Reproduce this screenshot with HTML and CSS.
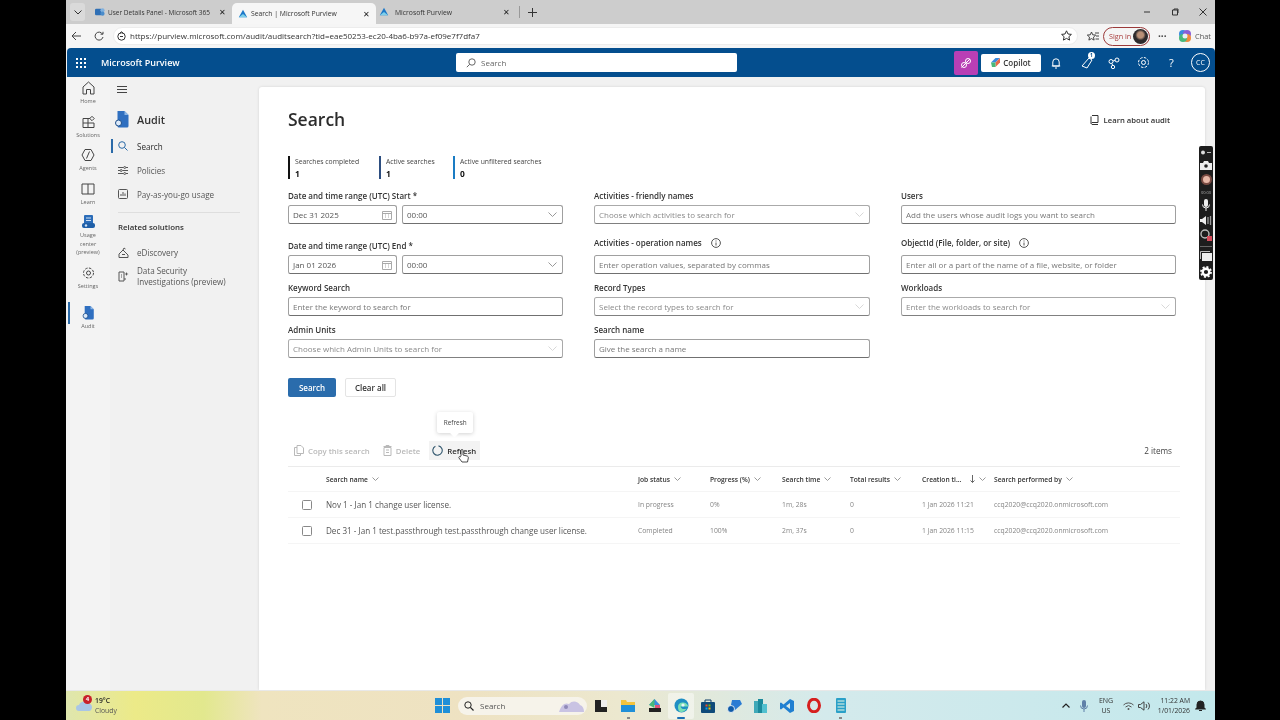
FILE: index.html
```html
<!DOCTYPE html>
<html lang="en">
<head>
<meta charset="utf-8">
<title>Search | Microsoft Purview</title>
<link rel="stylesheet" href="styles.css">
</head>
<body>
<div class="desktop">
  <div class="tabstrip">
    <div class="tab-menu"><svg width="8" height="5" viewBox="0 0 8 5"><path class="ln" d="M.5.5 4 4 7.500.5"/></svg></div>
    <div class="tab tab-a">
      <svg class="fav" viewBox="0 0 12 12"><rect x="0" y="2" width="8" height="8" rx="1.500" fill="#2f6fb5"/><circle cx="9" cy="4" r="2.500" fill="#7fb0de"/><circle cx="9" cy="8" r="2.500" fill="#4a8ccb"/></svg>
      <span class="tab-title">User Details Panel - Microsoft 365</span><span class="tab-x">✕</span>
    </div>
    <div class="tab tab-b">
      <svg class="fav" viewBox="0 0 12 12"><path d="M6 1 11 10H1z" fill="#1d78c8"/><path d="M6 6l5 4H1z" fill="#7fd0ea"/></svg>
      <span class="tab-title">Search | Microsoft Purview</span><span class="tab-x">✕</span>
    </div>
    <div class="tab tab-c">
      <svg class="fav" viewBox="0 0 12 12"><path d="M6 1 11 10H1z" fill="#1d78c8"/><path d="M6 6l5 4H1z" fill="#7fd0ea"/></svg>
      <span class="tab-title">Microsoft Purview</span><span class="tab-x">✕</span>
    </div>
    <div class="tab-sep"></div>
    <div class="tab-plus"><svg width="9" height="9" viewBox="0 0 9 9"><path class="ln" d="M4.500 0v9M0 4.500h9"/></svg></div>
    <div class="win-btns">
      <svg width="8" height="8" viewBox="0 0 8 8"><path class="ln" d="M1 4h6"/></svg>
      <svg width="8" height="8" viewBox="0 0 8 8"><path class="ln" d="M1.500 2h5v5h-5zM3 2V1h4v4"/></svg>
      <svg width="8" height="8" viewBox="0 0 8 8"><path class="ln" d="M.5.500l7 7M7.500.5l-7 7"/></svg>
    </div>
  </div>

  <div class="addressbar">
    <svg class="nav-ic" width="11" height="10" viewBox="0 0 11 10"><path class="ln" d="M10 5H1M5 1 1 5l4 4"/></svg>
    <svg class="nav-ic nav-reload" width="10" height="10" viewBox="0 0 10 10"><path class="ln" d="M8.500 3A4 4 0 1 0 9 6M9 .8V3.200H6.600"/></svg>
    <div class="url">
      <svg width="9" height="10" viewBox="0 0 9 10"><circle class="ln" cx="4.500" cy="5.500" r="3.700"/><path class="ln" d="M3 2 4.500.8 6 2M3 5.500h3"/></svg>
      <span>https://purview.microsoft.com/audit/auditsearch?tid=eae50253-ec20-4ba6-b97a-ef09e7f7dfa7</span>
      <svg class="url-star" width="11" height="11" viewBox="0 0 11 11"><path class="ln" d="M5.500.8 7 4l3.400.4-2.500 2.300.7 3.400-3.100-1.700-3.100 1.700.7-3.400L.6 4.400 4 4z"/></svg>
    </div>
    <svg class="fav-list" width="12" height="11" viewBox="0 0 12 11"><path class="ln" d="M4.500 1 5.700 3.800l3 .3-2.200 2 .6 3-2.600-1.500L1.900 9.100l.6-3-2.200-2 3-.3zM8 2h4M9 5h3M8.500 8H12"/></svg>
    <div class="signin"><span>Sign in</span><i class="avatar"></i></div>
    <div class="dots">···</div>
    <svg class="chat-ic" width="14" height="14" viewBox="0 0 14 14"><circle cx="5" cy="5" r="4" fill="#3a8be0"/><circle cx="9" cy="5" r="4" fill="#8a5fd6"/><circle cx="9" cy="9" r="4" fill="#f08a3c"/><circle cx="5" cy="9" r="4" fill="#49b87a"/><circle cx="7" cy="7" r="2.500" fill="#e9f0f5"/></svg>
    <span class="chat">Chat</span>
  </div>

  <header class="appbar">
    <div class="brand">
      <svg class="waffle" width="10" height="10" viewBox="0 0 10 10"><g fill="#fff"><rect width="2" height="2"/><rect x="4" width="2" height="2"/><rect x="8" width="2" height="2"/><rect y="4" width="2" height="2"/><rect x="4" y="4" width="2" height="2"/><rect x="8" y="4" width="2" height="2"/><rect y="8" width="2" height="2"/><rect x="4" y="8" width="2" height="2"/><rect x="8" y="8" width="2" height="2"/></g></svg>
      <span>Microsoft Purview</span>
    </div>
    <div class="globalsearch">
      <svg width="10" height="10" viewBox="0 0 10 10"><circle class="ln" cx="6" cy="4" r="3.200"/><path class="ln" d="M3.700 6.300.8 9.200"/></svg>
      <span>Search</span>
    </div>
    <div class="appbar-right">
      <div class="magenta"><svg width="12" height="12" viewBox="0 0 12 12"><circle class="ln" cx="8" cy="4" r="2.500"/><circle class="ln" cx="4" cy="8" r="2.500"/><path class="ln" d="M1.500 10.500 10 2"/></svg></div>
      <div class="copilot"><svg width="9" height="9" viewBox="0 0 9 9"><path d="M0 4.500 4.500 0 9 0 4.500 4.500z" fill="#3a8be0"/><path d="M9 0v4.500L4.500 9V4.500z" fill="#e66a4a"/><path d="M0 4.500 4.500 4.500V9H1z" fill="#49b87a"/></svg><span>Copilot</span></div>
      <svg class="bell" width="12" height="12" viewBox="0 0 12 12"><path class="ln" d="M2.800 9V5a3.200 3.200 0 0 1 6.400 0v4zM1.800 9h8.400M5 11h2"/></svg>
      <div class="hdr-fb">
        <svg width="13" height="13" viewBox="0 0 13 13"><path class="ln" d="M1 10 8 2l3 2-5 8z"/></svg>
        <b>1</b>
      </div>
      <svg class="hdr-net" width="12" height="12" viewBox="0 0 12 12"><circle class="ln" cx="9" cy="3" r="2"/><circle class="ln" cx="3" cy="4.500" r="2"/><circle class="ln" cx="5" cy="10" r="1.700"/><path class="ln" d="M5 4 7 3.500M4 6.500l.6 2"/></svg>
      <svg class="hdr-gear" width="13" height="13" viewBox="0 0 13 13"><circle class="ln" cx="6.500" cy="6.500" r="2"/><circle class="ln" cx="6.500" cy="6.500" r="5" stroke-dasharray="2.500 1.400"/></svg>
      <span class="hdr-q">?</span>
      <span class="hdr-cc">CC</span>
    </div>
  </header>

  <div class="appbody">
    <aside class="rail">
      <div class="rail-item"><svg width="13" height="14" viewBox="0 0 13 14"><path class="ln" d="M1 6 6.500 1 12 6v7H8.500V8.500h-4V13H1z"/></svg><span>Home</span></div>
      <div class="rail-item"><svg width="13" height="13" viewBox="0 0 13 13"><path class="ln" d="M1 3h5v9H1zM1 7.500h11V12H6M6 3h2M10 .8l2.200 2.200L10 5.200 7.800 3z"/></svg><span>Solutions</span></div>
      <div class="rail-item"><svg width="14" height="14" viewBox="0 0 14 14"><path class="ln" d="M4 1.500h6L13 7l-3 5.500H4L1 7zM8.500 3.500 5.500 10.500"/></svg><span>Agents</span></div>
      <div class="rail-item"><svg width="14" height="12" viewBox="0 0 14 12"><path class="ln" d="M1 1h12v10H1zM7 1v10"/></svg><span>Learn</span></div>
      <div class="rail-item rail-tall"><svg width="13" height="14" viewBox="0 0 13 14"><rect x="2" y="0" width="9" height="9" rx="1" fill="#2b6cb8"/><path d="M4 3h5M4 5.500h5" stroke="#cfe0f3"/><rect x="0" y="8" width="13" height="5" rx="2" fill="#1f5fa8"/><circle cx="4" cy="10.500" r="1.200" fill="#cfe0f3"/></svg><span>Usage center (preview)</span></div>
      <div class="rail-item"><svg width="13" height="13" viewBox="0 0 13 13"><circle class="ln" cx="6.500" cy="6.500" r="2"/><circle class="ln" cx="6.500" cy="6.500" r="5" stroke-dasharray="2.500 1.400"/></svg><span>Settings</span></div>
      <div class="rail-item rail-audit"><svg width="12" height="14" viewBox="0 0 14 17"><path d="M3 0h7l4 4v11a1.500 1.500 0 0 1-1.500 1.500H4.500A1.500 1.500 0 0 1 3 15z" fill="#2f6fc0"/><path d="M10 0l4 4h-4z" fill="#8db7e6"/><circle cx="4" cy="12" r="3" fill="#dceafa" stroke="#1c4e8a"/></svg><span>Audit</span></div>
    </aside>

    <nav class="sidenav">
      <svg class="hamb" width="10" height="7" viewBox="0 0 10 7"><path class="ln" d="M0 .5h10M0 3.500h10M0 6.500h10"/></svg>
      <div class="nav-head">
        <svg width="15" height="17" viewBox="0 0 14 17"><path d="M3 0h7l4 4v11a1.500 1.500 0 0 1-1.500 1.500H4.500A1.500 1.500 0 0 1 3 15z" fill="#2f6fc0"/><path d="M10 0l4 4h-4z" fill="#8db7e6"/><circle cx="4" cy="12" r="3" fill="#dceafa" stroke="#1c4e8a"/></svg>
        <span>Audit</span>
      </div>
      <ul class="nav-list">
        <li class="nav-row is-active"><svg width="10" height="10" viewBox="0 0 10 10"><circle class="ln" cx="4" cy="4" r="3.300"/><path class="ln" d="M6.400 6.400 9.500 9.500"/></svg><span>Search</span></li>
        <li class="nav-row"><svg width="10" height="9" viewBox="0 0 10 9"><path class="ln" d="M0 1.500h5.500M8 1.500h2M0 4.500h2M4.500 4.500H10M0 7.500h5.500M8 7.500h2"/><circle class="ln" cx="6.700" cy="1.500" r="1"/><circle class="ln" cx="3.200" cy="4.500" r="1"/><circle class="ln" cx="6.700" cy="7.500" r="1"/></svg><span>Policies</span></li>
        <li class="nav-row"><svg width="10" height="10" viewBox="0 0 10 10"><rect class="ln" x=".5" y=".5" width="9" height="9" rx="1"/><path class="ln" d="M3 7V5M5 7V3M7 7V4.500"/></svg><span>Pay-as-you-go usage</span></li>
      </ul>
      <div class="nav-div"></div>
      <div class="nav-sub">Related solutions</div>
      <ul class="nav-list nav-rel">
        <li class="nav-row"><svg width="11" height="11" viewBox="0 0 11 11"><path class="ln" d="M1 7 5 3l5 5v2.500H1zM5 3l1-2 1.500 1M4 7.500h3"/></svg><span>eDiscovery</span></li>
        <li class="nav-row nav-two"><svg width="11" height="11" viewBox="0 0 11 11"><path class="ln" d="M1 1h5v9H1zM3 4h1M3 6h1M6 8h2"/><path d="M8.500 1l.6 1.400L10.500 3l-1.400.6-.6 1.400-.6-1.400L6.500 3l1.400-.6z" fill="#555"/></svg><span>Data Security<br>Investigations (preview)</span></li>
      </ul>
    </nav>

    <main class="card">
      <div class="title-row">
        <h1>Search</h1>
        <div class="learn"><svg width="9" height="10" viewBox="0 0 9 10"><path class="ln" d="M2 .5h6v7H2A1.200 1.200 0 0 0 2 9.500h6M1 8.500V1.500"/></svg><span>Learn about audit</span></div>
      </div>

      <div class="stats">
        <div class="stat st-black"><span>Searches completed</span><b>1</b></div>
        <div class="stat st-navy"><span>Active searches</span><b>1</b></div>
        <div class="stat st-blue"><span>Active unfiltered searches</span><b>0</b></div>
      </div>

      <form class="form">
        <div class="field">
          <label>Date and time range (UTC) Start *</label>
          <div class="pair">
            <div class="ctl date"><span>Dec 31 2025</span><svg width="10" height="10" viewBox="0 0 10 10"><path class="ln cal" d="M.5 1.500h9v8h-9zM.5 3.500h9M3 5h1M6 5h1M3 7h1M6 7h1"/></svg></div>
            <div class="ctl time"><span>00:00</span><svg class="chev" width="9" height="5" viewBox="0 0 9 5"><path class="ln" d="M.5.500l4 4 4-4"/></svg></div>
          </div>
        </div>
        <div class="field">
          <label>Activities - friendly names</label>
          <div class="ctl muted"><span>Choose which activities to search for</span><svg class="chev" width="9" height="5" viewBox="0 0 9 5"><path class="ln" d="M.5.500l4 4 4-4"/></svg></div>
        </div>
        <div class="field">
          <label>Users</label>
          <div class="ctl"><span>Add the users whose audit logs you want to search</span></div>
        </div>

        <div class="field">
          <label>Date and time range (UTC) End *</label>
          <div class="pair">
            <div class="ctl date"><span>Jan 01 2026</span><svg width="10" height="10" viewBox="0 0 10 10"><path class="ln cal" d="M.5 1.500h9v8h-9zM.5 3.500h9M3 5h1M6 5h1M3 7h1M6 7h1"/></svg></div>
            <div class="ctl time"><span>00:00</span><svg class="chev" width="9" height="5" viewBox="0 0 9 5"><path class="ln" d="M.5.500l4 4 4-4"/></svg></div>
          </div>
        </div>
        <div class="field up1">
          <label>Activities - operation names <svg class="info" width="10" height="10" viewBox="0 0 10 10"><circle class="ln" cx="5" cy="5" r="4.400"/><path class="ln" d="M5 4.500V7.500M5 2.500v1"/></svg></label>
          <div class="ctl"><span>Enter operation values, separated by commas</span></div>
        </div>
        <div class="field up1">
          <label>ObjectId (File, folder, or site) <svg class="info" width="10" height="10" viewBox="0 0 10 10"><circle class="ln" cx="5" cy="5" r="4.400"/><path class="ln" d="M5 4.500V7.500M5 2.500v1"/></svg></label>
          <div class="ctl"><span>Enter all or a part of the name of a file, website, or folder</span></div>
        </div>

        <div class="field">
          <label>Keyword Search</label>
          <div class="ctl"><span>Enter the keyword to search for</span></div>
        </div>
        <div class="field">
          <label>Record Types</label>
          <div class="ctl muted"><span>Select the record types to search for</span><svg class="chev" width="9" height="5" viewBox="0 0 9 5"><path class="ln" d="M.5.500l4 4 4-4"/></svg></div>
        </div>
        <div class="field">
          <label>Workloads</label>
          <div class="ctl muted"><span>Enter the workloads to search for</span><svg class="chev" width="9" height="5" viewBox="0 0 9 5"><path class="ln" d="M.5.500l4 4 4-4"/></svg></div>
        </div>

        <div class="field">
          <label>Admin Units</label>
          <div class="ctl muted"><span>Choose which Admin Units to search for</span><svg class="chev" width="9" height="5" viewBox="0 0 9 5"><path class="ln" d="M.5.500l4 4 4-4"/></svg></div>
        </div>
        <div class="field">
          <label>Search name</label>
          <div class="ctl"><span>Give the search a name</span></div>
        </div>
      </form>

      <div class="actions">
        <button type="button" class="btn-primary">Search</button>
        <button type="button" class="btn-plain">Clear all</button>
      </div>

      <div class="cmdbar">
        <div class="cmd cmd-off cmd-copy"><svg width="10" height="11" viewBox="0 0 10 11"><path class="ln" d="M3 .5h4l2.500 2.500v5.500H3zM3 2.500H.5v8h6V8.500"/></svg><span>Copy this search</span></div>
        <div class="cmd cmd-off cmd-del"><svg width="9" height="11" viewBox="0 0 9 11"><path class="ln" d="M1 2.500h7v8H1zM.5 1.500h8M3 1.500V.5h3v1M3 5h3M3 7.500h3"/></svg><span>Delete</span></div>
        <div class="cmd cmd-refresh">
          <svg width="11" height="11" viewBox="0 0 11 11"><path class="spin" d="M3.400 1.300A4.700 4.700 0 1 0 6.500.9"/></svg><span>Refresh</span>
          <div class="tooltip">Refresh</div>
          <svg class="hand" width="11" height="14" viewBox="0 0 11 14"><path d="M3 7V1.500a1 1 0 0 1 2 0V6l4 1c1 .3 1.500 1 1.300 2L9.500 13H4L1 9c-.6-1 .6-2 1.300-1.200z" fill="#fff" stroke="#222" stroke-width=".8"/></svg>
        </div>
        <div class="count">2 items</div>
      </div>

      <div class="grid-table">
        <div class="tr th">
          <div></div>
          <div>Search name<svg class="sort" width="7" height="4" viewBox="0 0 7 4"><path class="ln" d="M.5.500l3 3 3-3"/></svg></div>
          <div>Job status<svg class="sort" width="7" height="4" viewBox="0 0 7 4"><path class="ln" d="M.5.500l3 3 3-3"/></svg></div>
          <div>Progress (%)<svg class="sort" width="7" height="4" viewBox="0 0 7 4"><path class="ln" d="M.5.500l3 3 3-3"/></svg></div>
          <div>Search time<svg class="sort" width="7" height="4" viewBox="0 0 7 4"><path class="ln" d="M.5.500l3 3 3-3"/></svg></div>
          <div>Total results<svg class="sort" width="7" height="4" viewBox="0 0 7 4"><path class="ln" d="M.5.500l3 3 3-3"/></svg></div>
          <div>Creation ti...<svg class="sort-down" width="5" height="8" viewBox="0 0 5 8"><path class="ln" d="M2.500 0v7.500M.5 5.500l2 2 2-2"/></svg><svg class="sort" width="7" height="4" viewBox="0 0 7 4"><path class="ln" d="M.5.500l3 3 3-3"/></svg></div>
          <div>Search performed by<svg class="sort" width="7" height="4" viewBox="0 0 7 4"><path class="ln" d="M.5.500l3 3 3-3"/></svg></div>
        </div>
        <div class="tr td">
          <div><i class="check"></i></div>
          <div class="name">Nov 1 - Jan 1 change user license.</div>
          <div>In progress</div><div>0%</div><div>1m, 28s</div><div>0</div><div>1 Jan 2026 11:21</div><div>ccq2020@ccq2020.onmicrosoft.com</div>
        </div>
        <div class="tr td">
          <div><i class="check"></i></div>
          <div class="name">Dec 31 - Jan 1 test.passthrough test.passthrough change user license.</div>
          <div>Completed</div><div>100%</div><div>2m, 37s</div><div>0</div><div>1 Jan 2026 11:15</div><div>ccq2020@ccq2020.onmicrosoft.com</div>
        </div>
      </div>
    </main>
  </div>

  <footer class="taskbar">
    <div class="weather">
      <svg class="cloud" width="17" height="13" viewBox="0 0 17 13"><path d="M3 12a3 3 0 0 1 0-6c1-3 6-5 8-2 3 0 5 2 5 4s-1 4-3 4z" fill="#a9c6e6"/></svg>
      <b class="wbadge">4</b>
      <div class="wtext"><strong>19°C</strong><span>Cloudy</span></div>
    </div>
    <div class="tb-center">
      <svg class="winlogo" width="15" height="15" viewBox="0 0 15 15"><g fill="#1f8fd8"><rect width="7" height="7"/><rect x="8" width="7" height="7"/><rect y="8" width="7" height="7"/><rect x="8" y="8" width="7" height="7"/></g></svg>
      <div class="tb-search">
        <svg width="10" height="10" viewBox="0 0 10 10"><circle cx="4" cy="4" r="3.200" fill="none" stroke="#222"/><path d="M6.400 6.400 9.500 9.500" stroke="#222" stroke-width="1.200"/></svg>
        <span>Search</span>
        <svg class="tb-art" width="28" height="14" viewBox="0 0 28 14"><path d="M2 13C4 6 8 3 12 5c3-4 9-3 11 1 3 1 4 4 4 7z" fill="#c9c3e3"/><circle cx="9" cy="8" r="2" fill="#8f89b8"/></svg>
      </div>
      <div class="tb-ic"><svg width="12" height="12" viewBox="0 0 12 12"><rect width="12" height="12" fill="#eee"/><path d="M0 0h6v7h6v5H0z" fill="#222"/></svg></div>
      <div class="tb-ic dotbelow"><svg width="14" height="12" viewBox="0 0 14 12"><path d="M0 0h5l1 2h8v10H0z" fill="#f3c33c"/><rect y="5" width="14" height="7" fill="#1f8fd8"/></svg></div>
      <div class="tb-ic"><svg width="15" height="15" viewBox="0 0 15 15"><path d="M7.500 1 13 7H2z" fill="#3a8be0"/><path d="M2 7 7.500 1v9z" fill="#49b87a"/><path d="M13 7H8v4h5z" fill="#e0527a"/><rect x="2" y="10" width="12" height="4" fill="#222"/></svg></div>
      <div class="tb-ic tb-active"><svg width="15" height="15" viewBox="0 0 15 15"><circle cx="7.500" cy="7.500" r="7" fill="#1f8fc4"/><path d="M4 9c0-3 2-4.500 4.500-4.500S14 6 14 8.500H6.500c.3 2 3 3.500 6 2-1 2-3 3.500-5 3.500C5 14 4 12 4 9z" fill="#7be0b5"/><circle cx="9" cy="7" r="1.600" fill="#eaf3f7"/></svg></div>
      <div class="tb-ic"><svg width="14" height="14" viewBox="0 0 14 14"><path d="M4 3V1h6v2" fill="none" stroke="#0f3c66"/><rect y="3" width="14" height="11" rx="1" fill="#0f4a7a"/><g><rect x="4.500" y="5.500" width="2" height="2" fill="#f25022"/><rect x="7.500" y="5.500" width="2" height="2" fill="#7fba00"/><rect x="4.500" y="8.500" width="2" height="2" fill="#00a4ef"/><rect x="7.500" y="8.500" width="2" height="2" fill="#ffb900"/></g></svg></div>
      <div class="tb-ic"><svg width="15" height="14" viewBox="0 0 15 14"><path d="M5 1h8l2 4-7 6H3z" fill="#2b7cd3"/><circle cx="4" cy="10" r="3.500" fill="#0f5ba8" stroke="#fff" stroke-width=".8"/></svg></div>
      <div class="tb-ic"><svg width="13" height="14" viewBox="0 0 13 14"><rect y="2" width="6" height="12" fill="#3fa9b8"/><rect x="4" width="5" height="14" fill="#1b8a9c"/><rect x="8" y="5" width="5" height="9" fill="#52c0cf"/></svg></div>
      <div class="tb-ic"><svg width="14" height="14" viewBox="0 0 14 14"><path d="M10 0 14 2v10l-4 2L3.500 8.500 1 10.500 0 10V4l1-.5 2.500 2zM10 4 6 7l4 3z" fill="#1f7fd1"/></svg></div>
      <div class="tb-ic"><svg width="14" height="15" viewBox="0 0 14 15"><ellipse cx="7" cy="7.500" rx="5.500" ry="6.300" fill="none" stroke="#d6201f" stroke-width="3"/></svg></div>
      <div class="tb-ic dotbelow"><svg width="10" height="15" viewBox="0 0 10 15"><rect width="10" height="15" rx="1" fill="#2aa0c8"/><path d="M1.500 3h7M1.500 6h7M1.500 9h7M1.500 12h7" stroke="#eef8e4"/></svg></div>
    </div>
    <div class="tray">
      <svg width="8" height="5" viewBox="0 0 8 5"><path d="M.5 4.500 4 1l3.500 3.500" fill="none" stroke="#222" stroke-width="1.200"/></svg>
      <svg class="tray-mic" width="8" height="12" viewBox="0 0 8 12"><rect x="2" width="4" height="8" rx="2" fill="#5f80a8"/><path d="M.5 5.500a3.500 3.500 0 0 0 7 0M4 9v3" fill="none" stroke="#5f80a8"/></svg>
      <div class="lang"><span>ENG</span><span>US</span></div>
      <svg class="tray-wifi" width="11" height="8" viewBox="0 0 11 8"><path d="M.5 3a7 7 0 0 1 10 0M2.500 5a4.300 4.300 0 0 1 6 0" fill="none" stroke="#555"/><circle cx="5.500" cy="7" r="1" fill="#555"/></svg>
      <svg width="12" height="10" viewBox="0 0 12 10"><path d="M.5 3.500h2L6 .8v8.400L2.500 6.500h-2zM8 3a3 3 0 0 1 0 4M10 1.500a5 5 0 0 1 0 7" fill="none" stroke="#444"/></svg>
      <div class="clock"><span>11:22 AM</span><span>1/01/2026</span></div>
      <svg class="tray-bell" width="11" height="12" viewBox="0 0 11 12"><path d="M2 8V4.500a3.500 3.500 0 0 1 7 0V8l1.500 1h-10zM4 10.500h3" fill="#222" stroke="#222"/></svg>
    </div>
  </footer>

  <aside class="recorder">
    <svg width="12" height="7" viewBox="0 0 12 7"><circle cx="3" cy="3.500" r="2" fill="#ddd"/><path d="M7 3.500h4" stroke="#bbb"/></svg>
    <svg width="12" height="9" viewBox="0 0 12 9"><path d="M0 2h3l1-2h4l1 2h3v7H0z" fill="#eee"/><circle cx="6" cy="5" r="1.800" fill="#222"/></svg>
    <i class="rec-dot"></i>
    <span class="rec-time">00:00</span>
    <svg width="8" height="12" viewBox="0 0 8 12"><rect x="2" width="4" height="8" rx="2" fill="#eee"/><path d="M.5 5.500a3.500 3.500 0 0 0 7 0M4 9v3" fill="none" stroke="#eee"/></svg>
    <svg width="12" height="9" viewBox="0 0 12 9"><path d="M0 3h2l4-3v9L2 6H0z" fill="#eee"/><path d="M8 1v7M10.500 0v9" stroke="#999" stroke-width="1.300"/></svg>
    <svg width="12" height="12" viewBox="0 0 12 12"><circle cx="5" cy="5" r="4" fill="none" stroke="#bbb" stroke-width="1.400"/><rect x="7" y="7" width="5" height="5" fill="#d64a5a"/></svg>
    <i class="rec-line"></i>
    <svg width="12" height="10" viewBox="0 0 12 10"><rect x="2" y="2" width="10" height="8" fill="#eee"/><path d="M.5 8V.5H10" fill="none" stroke="#bbb"/></svg>
    <svg width="12" height="12" viewBox="0 0 12 12"><circle cx="6" cy="6" r="3.300" fill="none" stroke="#fff" stroke-width="2.400"/><circle cx="6" cy="6" r="5" fill="none" stroke="#fff" stroke-width="1.800" stroke-dasharray="2 1.900"/></svg>
  </aside>
</div>
</body>
</html>
```
FILE: styles.css
```css
* { box-sizing: border-box; }
html, body { margin: 0; height: 100%; background: #000; overflow: hidden; }
body { font-family: "Open Sans", "Noto Sans", "Liberation Sans", sans-serif; color: #333; }
ul { list-style: none; margin: 0; padding: 0; }
svg { flex: none; display: block; }
.ln { fill: none; stroke: currentColor; stroke-width: 1; }

.desktop { position: relative; width: 1149px; height: 720px; margin-left: 66px; display: flex; flex-direction: column; background: #f1f1f1; filter: blur(.3px); }

/* browser tab strip */
.tabstrip { height: 24px; flex: none; display: flex; align-items: flex-end; background: #cdcdcd; padding-left: 4px; color: #333; font-size: 6.800px; }
.tab-menu { width: 15px; height: 18px; margin-bottom: 3px; background: #dadada; border-radius: 3px; display: flex; align-items: center; justify-content: center; }
.tab { height: 21px; padding: 0 5px 3px 10px; display: flex; align-items: center; gap: 3px; }
.tab-a { width: 147px; font-size: 6.500px; }
.tab-b { width: 144px; padding-left: 6px; gap: 3px; background: #f6f6f6; border-radius: 5px 5px 0 0; padding-bottom: 0; }
.tab-c { width: 140px; padding-left: 3px; gap: 6px; }
.fav { width: 10px; height: 10px; }
.tab-title { flex: 1; white-space: nowrap; }
.tab-x { font-size: 7.500px; width: 9px; text-align: center; color: #222; }
.tab-sep { width: 1px; height: 12px; margin: 0 0 6px 3px; background: #999; }
.tab-plus { margin: 0 0 7px 8px; }
.win-btns { margin-left: auto; height: 24px; padding-right: 8px; display: flex; align-items: center; gap: 20px; }

/* address bar */
.addressbar { height: 24px; flex: none; display: flex; align-items: center; background: #f5f5f5; padding-left: 5px; color: #444; }
.nav-ic { margin-right: 12px; }
.nav-reload { margin-right: 9px; }
.url { width: 965px; height: 18px; margin-top: -1px; border-radius: 9px; background: #fff; border: 1px solid #ececec; display: flex; align-items: center; padding: 0 4px 0 3px; gap: 4px; font-size: 8px; color: #333; white-space: nowrap; }
.url-star { margin-left: auto; margin-right: 1px; }
.fav-list { margin-left: 9px; }
.signin { margin-left: 4px; width: 47px; height: 19px; border: 1px solid #9b3a3a; border-radius: 10px; display: flex; align-items: center; justify-content: space-between; padding: 0 1px 0 5px; font-size: 7.200px; color: #a83c3c; }
.avatar { width: 15px; height: 15px; border-radius: 50%; background: radial-gradient(circle at 50% 40%, #b99077 0 25%, #2d2a2c 45%); }
.dots { margin-left: 8px; width: 10px; font-size: 10px; font-weight: 700; }
.chat-ic { margin-left: 10px; }
.chat { margin-left: 3px; font-size: 7.400px; color: #555; }

/* application bar */
.appbar { height: 29px; flex: none; margin-left: 1px; display: flex; align-items: center; background: #044e8e; border-radius: 4px 4px 0 0; color: #fff; }
.brand { width: 389px; display: flex; align-items: center; padding-left: 9px; font-size: 9px; font-weight: 600; }
.waffle { margin-right: 15px; }
.globalsearch { width: 281px; height: 19px; background: #fff; border-radius: 2px; display: flex; align-items: center; gap: 5px; padding-left: 10px; color: #666; font-size: 8px; }
.appbar-right { margin-left: auto; display: flex; align-items: center; height: 29px; padding-right: 5px; }
.magenta { width: 24px; height: 24px; background: #b83fb5; border-radius: 2px; display: flex; align-items: center; justify-content: center; }
.copilot { margin-left: 3px; width: 60px; height: 18px; background: #fff; border-radius: 2px; color: #333; display: flex; align-items: center; justify-content: center; gap: 3px; font-size: 8px; font-weight: 600; }
.bell { margin-left: 9px; }
.hdr-fb { position: relative; margin-left: 19px; }
.hdr-fb b { position: absolute; left: 7px; top: -4px; width: 7px; height: 7px; border-radius: 50%; background: #fff; color: #044e8e; font-size: 5px; line-height: 7px; text-align: center; }
.hdr-net { margin-left: 14px; }
.hdr-gear { margin-left: 17px; }
.hdr-q { margin-left: 19px; width: 7px; font-size: 11px; }
.hdr-cc { margin-left: 15px; width: 19px; height: 19px; border: 1px solid #fff; border-radius: 50%; font-size: 7px; line-height: 17px; text-align: center; }

/* body */
.appbody { flex: 1; min-height: 0; display: flex; background: #f1f1f1; padding: 0 10px 0 0; }
.rail { width: 44px; flex: none; padding-top: 4px; background: #f3f3f3; display: flex; flex-direction: column; align-items: center; color: #444; }
.rail-item { position: relative; width: 44px; height: 33.500px; display: flex; flex-direction: column; align-items: center; gap: 2px; }
.rail-item svg { height: 14px; }
.rail-item span { font-size: 5.500px; line-height: 8px; color: #666; text-align: center; }
.rail-tall { height: 50.500px; padding: 0 6px; }
.rail-tall span { line-height: 8.700px; }
.rail-audit { margin-top: 6.500px; }
.rail-audit::before { content: ""; position: absolute; left: 2px; top: -4px; width: 1.500px; height: 22px; background: #2a6aa8; }
.sidenav { width: 149px; flex: none; padding: 9px 0 0 8px; color: #444; }
.hamb { margin-left: -1px; }
.nav-head { display: flex; align-items: center; gap: 8px; margin: 18px 0 0 -4px; font-size: 10.800px; font-weight: 600; color: #333; }
.nav-list { margin-top: 6px; }
.nav-row { position: relative; display: flex; align-items: center; gap: 9px; height: 24px; font-size: 8.100px; color: #555; }
.nav-row.is-active { color: #2a2a2a; font-weight: 500; }
.nav-row.is-active svg { color: #2a6aa8; }
.nav-row.is-active::before { content: ""; position: absolute; left: -7px; top: 5px; width: 1.500px; height: 14px; background: #2a6aa8; }
.nav-div { width: 122px; height: 1px; margin-top: 6px; background: #dedede; }
.nav-sub { margin-top: 9px; font-size: 7.900px; font-weight: 600; color: #333; }
.nav-rel { margin-top: 8px; }
.nav-rel .nav-row { gap: 8px; }
.nav-two { height: 24px; line-height: 11.500px; }

/* main card */
.card { flex: 1; min-width: 0; height: 603px; margin: 10px 0 0 0; padding: 20px 29px 0; background: #fff; border-radius: 3px 3px 0 0; box-shadow: 0 0 3px rgba(0,0,0,.12); }
.title-row { display: flex; align-items: center; justify-content: space-between; height: 24px; }
h1 { margin: 0; font-size: 17.500px; font-weight: 600; color: #2c2c2c; }
.learn { display: flex; align-items: center; gap: 5px; padding: 2px 6px 0 0; font-size: 7.700px; font-weight: 600; color: #333; }
.stats { display: flex; margin-top: 25px; height: 23px; }
.stat { display: flex; flex-direction: column; justify-content: space-between; padding-left: 5px; border-left: 2px solid #111; font-size: 6.800px; color: #444; }
.stat b { font-size: 8.400px; line-height: 10px; color: #111; }
.stat span { line-height: 11px; }
.st-black { width: 91px; }
.st-navy { width: 74px; border-left-color: #2d4e80; }
.st-blue { border-left-color: #1a7cc4; }

.form { display: grid; grid-template-columns: 275px 276px 275px; column-gap: 31px; grid-template-rows: 43px 35px 35px 35px; row-gap: 7px; margin-top: 10px; height: 169px; }
.field { display: flex; flex-direction: column; justify-content: flex-start; gap: 2px; }
.field label { display: flex; align-items: center; gap: 7px; flex: none; line-height: 14px; font-size: 8px; font-weight: 600; color: #333; white-space: pre; }
.up1 label { margin: -3px 0 3px; }
.ctl { flex: none; height: 19px; display: flex; align-items: center; justify-content: space-between; padding: 0 4px; background: #fff; border: 1px solid #a0a0a0; border-bottom-color: #707070; border-radius: 2.500px; font-size: 8px; color: #777; white-space: nowrap; }
.muted { color: #8a8a8a; border-color: #aaa; border-bottom-color: #808080; }
.muted .chev { color: #d8d8d8; }
.pair { display: flex; gap: 5px; }
.date { width: 109px; color: #555; }
.time { flex: 1; color: #555; }
.cal { color: #aaa; }
.chev { color: #999; margin-right: 1px; }
.info { color: #555; }

.actions { display: flex; gap: 9px; margin-top: 20px; }
.actions button { height: 19px; padding: 0; border-radius: 2px; font-family: inherit; font-size: 8px; font-weight: 600; }
.btn-primary { width: 48px; background: #2a6cac; border: 0; color: #fff; }
.btn-plain { width: 51px; background: #fff; border: 1px solid #e4e4e4; color: #333; }

.cmdbar { position: relative; display: flex; align-items: center; height: 19px; margin-top: 44px; font-size: 7.800px; font-weight: 600; }
.cmd { display: flex; align-items: center; height: 19px; }
.cmd-off { color: #b9b9b9; }
.cmd-copy { margin-left: 6px; gap: 4px; }
.cmd-del { margin-left: 13px; gap: 4px; }
.cmd-refresh { position: relative; margin-left: 9px; width: 51px; padding-left: 3px; gap: 4px; background: #f3f3f3; color: #2e2e2e; }
.spin { fill: none; stroke: #33586f; stroke-width: 1.100; }
.tooltip { position: absolute; left: 8px; bottom: calc(100% + 8px); width: 36px; height: 21px; background: #fff; border-radius: 2px; box-shadow: 0 1px 4px rgba(0,0,0,.18); font-size: 6.400px; font-weight: 400; line-height: 21px; text-align: center; color: #444; }
.tooltip::after { content: ""; position: absolute; left: 14px; top: 17px; width: 7px; height: 7px; background: #fff; transform: rotate(45deg); }
.hand { position: absolute; left: 29px; top: 8px; }
.count { margin-left: auto; padding-right: 4px; font-size: 8.200px; font-weight: 400; color: #444; }

.grid-table { margin: 6px -4px 0 0; border-top: 1px solid #ebebeb; font-size: 6.800px; color: #858585; }
.tr { display: grid; grid-template-columns: 38px 312px 72px 72px 68px 72px 72px 1fr; align-items: center; height: 26px; border-bottom: 1px solid #f5f5f5; white-space: nowrap; }
.th { color: #333; font-weight: 600; height: 25px; font-size: 6.700px; }
.th > div { display: flex; align-items: center; gap: 4px; }
.sort { color: #999; }
.sort-down { color: #666; margin-left: 5px; }
.check { display: block; width: 10px; height: 10px; margin-left: 14px; border: 1px solid #888; border-radius: 1.500px; }
.name { font-size: 8.100px; color: #555; }

/* taskbar */
.taskbar { position: relative; height: 30px; flex: none; display: flex; align-items: center; border-top: 1px solid #e8e8e8; background: linear-gradient(90deg, #dfe6ae 0, #ecea88 6%, #e2e88e 12%, #efe4bf 17%, #eee2c2 35%, #ece8cf 48%, #d4eaec 66%, #c3e8ec 100%); }
.weather { position: relative; width: 369px; height: 29px; display: flex; align-items: center; padding-left: 10px; gap: 2px; }
.wbadge { position: absolute; left: 17px; top: 4px; width: 9px; height: 9px; border-radius: 50%; background: #c8202a; color: #fff; font-size: 6px; line-height: 9px; text-align: center; }
.wtext { display: flex; flex-direction: column; font-size: 6.800px; line-height: 9.500px; color: #555; }
.wtext strong { color: #222; font-weight: 600; }
.tb-center { display: flex; align-items: center; }
.tb-search { width: 129px; height: 18px; margin-left: 8px; padding: 0 2px 0 6px; display: flex; align-items: center; gap: 6px; border-radius: 9px; background: #f6f3ea; font-size: 8px; color: #555; }
.tb-art { margin-left: auto; }
.tb-ic { position: relative; width: 26.600px; height: 26px; display: flex; align-items: center; justify-content: center; }
.tb-search + .tb-ic { margin-left: 1px; }
.tb-active { background: rgba(255,255,255,.45); border-radius: 2px; }
.tb-active::after { content: ""; position: absolute; left: 9px; bottom: 0; width: 8px; height: 2px; background: #1a6fb4; border-radius: 1px; }
.dotbelow::after { content: ""; position: absolute; left: 12px; bottom: 0; width: 3px; height: 2px; background: #888; }
.tray { margin-left: auto; display: flex; align-items: center; padding-right: 9px; color: #333; }
.tray-mic { margin-left: 10px; }
.lang { display: flex; flex-direction: column; align-items: center; width: 16px; margin: 0 9px 0 10px; font-size: 7px; line-height: 9.500px; }
.tray-wifi { margin-right: 4px; }
.clock { display: flex; flex-direction: column; align-items: flex-end; width: 39px; margin-left: 1px; font-size: 6.800px; line-height: 9.500px; }
.tray-bell { margin-left: 5px; }

/* recorder overlay */
.recorder { position: absolute; left: 1133px; top: 146px; width: 14px; height: 134px; padding-top: 3px; background: #1d1d1d; border-radius: 2px; display: flex; flex-direction: column; align-items: center; gap: 4.500px; }
.rec-dot { width: 11px; height: 11px; border-radius: 50%; background: #e8b8a8; border: 2px solid #7a4b42; }
.rec-time { font-size: 4px; line-height: 5px; color: #aaa; }
.rec-line { width: 12px; height: 1px; background: #666; }
```
